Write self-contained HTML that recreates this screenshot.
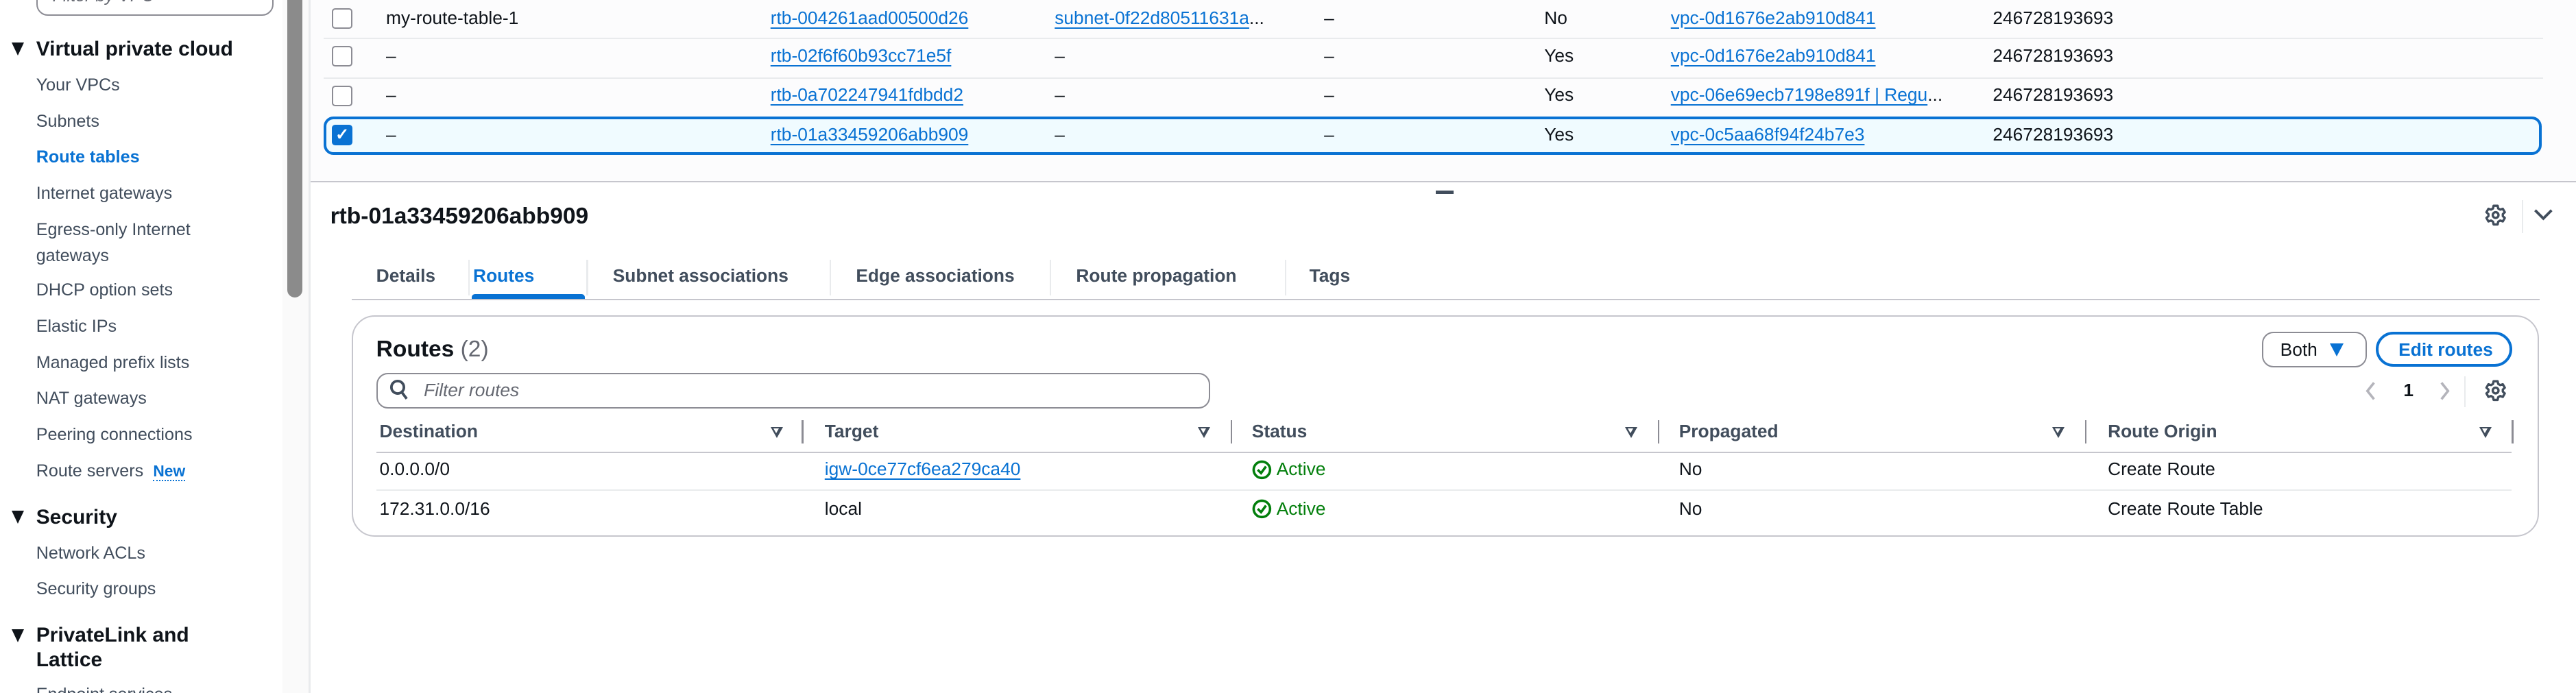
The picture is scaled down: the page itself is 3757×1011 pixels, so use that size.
<!DOCTYPE html>
<html><head><meta charset="utf-8"><style>
html,body{margin:0;padding:0;background:#fff;overflow:hidden}
#w{zoom:2.396;width:1568px;height:422px;position:relative;font-family:"Liberation Sans",sans-serif;font-size:11px;color:#0f141a;overflow:hidden}
.t{position:absolute;white-space:nowrap;line-height:14px}
.a{color:#0972d3;text-decoration:underline;text-underline-offset:2px}
.b{font-weight:bold}
.nav{color:#414d5c;font-size:10.5px}
.hd{font-weight:bold;font-size:12.5px;color:#0f141a}
.tri{position:absolute;width:0;height:0;border-left:4px solid transparent;border-right:4px solid transparent;border-top:8px solid #0f141a}
.cb{position:absolute;width:11px;height:11px;border:1px solid #8c8c94;border-radius:2px;background:#fff}
.hl{position:absolute;height:1px;background:#e9ebed}
.vl{position:absolute;width:1px;background:#c6c6cd}
.ft{position:absolute;width:0;height:0;border-left:4px solid transparent;border-right:4px solid transparent;border-top:7px solid #414d5c}
.ft:after{content:"";position:absolute;left:-2px;top:-6px;border-left:2px solid transparent;border-right:2px solid transparent;border-top:3px solid #fff}
</style></head><body><div id="w">
<!-- sidebar -->
<div style="position:absolute;left:0;top:0;width:172px;height:422px;background:#fff"></div>
<div style="position:absolute;left:172px;top:0;width:16px;height:422px;background:#fafafa"></div>
<div style="position:absolute;left:175px;top:-5px;width:9px;height:186px;background:#8b8b8b;border-radius:0 0 5px 5px"></div>
<div style="position:absolute;left:188px;top:0;width:1px;height:422px;background:#e9ebed"></div>
<div style="position:absolute;left:22px;top:-12px;width:143px;height:20px;border:1px solid #8c8c94;border-radius:7px;background:#fff"></div>
<div class="t" style="left:32px;top:-9px;color:#656871;font-style:italic;font-size:10.5px">Filter by VPC</div>
<div class="tri" style="left:7px;top:26px"></div><div class="t hd" style="left:22px;top:23px">Virtual private cloud</div>
<div class="t nav" style="left:22px;top:45px">Your VPCs</div>
<div class="t nav" style="left:22px;top:67px">Subnets</div>
<div class="t nav b" style="left:22px;top:89px;color:#0972d3">Route tables</div>
<div class="t nav" style="left:22px;top:111px">Internet gateways</div>
<div class="t nav" style="left:22px;top:133px">Egress-only Internet</div>
<div class="t nav" style="left:22px;top:149px">gateways</div>
<div class="t nav" style="left:22px;top:170px">DHCP option sets</div>
<div class="t nav" style="left:22px;top:192px">Elastic IPs</div>
<div class="t nav" style="left:22px;top:214px">Managed prefix lists</div>
<div class="t nav" style="left:22px;top:236px">NAT gateways</div>
<div class="t nav" style="left:22px;top:258px">Peering connections</div>
<div class="t nav" style="left:22px;top:280px">Route servers <span style="color:#0972d3;font-weight:bold;font-size:9.5px;margin-left:3px;border-bottom:1px dotted #0972d3">New</span></div>
<div class="tri" style="left:7px;top:311px"></div><div class="t hd" style="left:22px;top:308px">Security</div>
<div class="t nav" style="left:22px;top:330px">Network ACLs</div>
<div class="t nav" style="left:22px;top:352px">Security groups</div>
<div class="tri" style="left:7px;top:383px"></div><div class="t hd" style="left:22px;top:380px">PrivateLink and</div>
<div class="t hd" style="left:22px;top:395px">Lattice</div>
<div class="t nav" style="left:22px;top:416px">Endpoint services</div>
<!-- top table -->
<div style="position:absolute;left:189px;top:0;width:1379px;height:110px;background:#fcfcfd"></div>
<div class="hl" style="left:197px;top:23px;width:1351px"></div>
<div class="hl" style="left:197px;top:47px;width:1351px"></div>
<div style="position:absolute;left:197px;top:71px;width:1347px;height:20px;border:2px solid #0972d3;border-radius:6px;background:#f0fbff"></div>
<div class="cb" style="left:202px;top:5px"></div>
<div class="cb" style="left:202px;top:28px"></div>
<div class="cb" style="left:202px;top:52px"></div>
<div class="cb" style="left:202px;top:76px;background:#0972d3;border-color:#0972d3;color:#fff;font-size:10px;line-height:11px;text-align:center;font-weight:bold">✓</div>
<div class="t" style="left:235px;top:4px">my-route-table-1</div>
<div class="t" style="left:235px;top:27px">–</div><div class="t" style="left:235px;top:51px">–</div><div class="t" style="left:235px;top:75px">–</div>
<div class="t a" style="left:469px;top:4px">rtb-004261aad00500d26</div>
<div class="t a" style="left:469px;top:27px">rtb-02f6f60b93cc71e5f</div>
<div class="t a" style="left:469px;top:51px">rtb-0a702247941fdbdd2</div>
<div class="t a" style="left:469px;top:75px">rtb-01a33459206abb909</div>
<div class="t" style="left:642px;top:4px"><span class="a">subnet-0f22d80511631a</span>...</div>
<div class="t" style="left:642px;top:27px">–</div><div class="t" style="left:642px;top:51px">–</div><div class="t" style="left:642px;top:75px">–</div>
<div class="t" style="left:806px;top:4px">–</div><div class="t" style="left:806px;top:27px">–</div><div class="t" style="left:806px;top:51px">–</div><div class="t" style="left:806px;top:75px">–</div>
<div class="t" style="left:940px;top:4px">No</div><div class="t" style="left:940px;top:27px">Yes</div><div class="t" style="left:940px;top:51px">Yes</div><div class="t" style="left:940px;top:75px">Yes</div>
<div class="t a" style="left:1017px;top:4px">vpc-0d1676e2ab910d841</div>
<div class="t a" style="left:1017px;top:27px">vpc-0d1676e2ab910d841</div>
<div class="t" style="left:1017px;top:51px"><span class="a">vpc-06e69ecb7198e891f | Regu</span>...</div>
<div class="t a" style="left:1017px;top:75px">vpc-0c5aa68f94f24b7e3</div>
<div class="t" style="left:1213px;top:4px">246728193693</div><div class="t" style="left:1213px;top:27px">246728193693</div><div class="t" style="left:1213px;top:51px">246728193693</div><div class="t" style="left:1213px;top:75px">246728193693</div>
<!-- split -->
<div style="position:absolute;left:189px;top:110px;width:1379px;height:1px;background:#c6c6cd"></div>
<div style="position:absolute;left:874px;top:116px;width:11px;height:2px;background:#414d5c"></div>
<div class="t b" style="left:201px;top:124px;font-size:14px;line-height:16px">rtb-01a33459206abb909</div>
<svg style="position:absolute;left:1512px;top:124px" width="14" height="14" viewBox="0 0 16 16"><path d="M6.6 1.5h2.8l.4 1.9 1.4.8 1.8-.6 1.4 2.4-1.4 1.3v1.4l1.4 1.3-1.4 2.4-1.8-.6-1.4.8-.4 1.9H6.6l-.4-1.9-1.4-.8-1.8.6-1.4-2.4 1.4-1.3V7.3L1.6 6l1.4-2.4 1.8.6 1.4-.8z" fill="none" stroke="#414d5c" stroke-width="1.6" stroke-linejoin="round"/><circle cx="8" cy="8" r="2" fill="none" stroke="#414d5c" stroke-width="1.6"/></svg>
<div style="position:absolute;left:1535px;top:122px;width:1px;height:20px;background:#e9ebed"></div>
<svg style="position:absolute;left:1542px;top:126px" width="12" height="10" viewBox="0 0 12 10"><path d="M1 2l5 5 5-5" fill="none" stroke="#414d5c" stroke-width="1.6"/></svg>
<!-- tabs -->
<div class="t b" style="left:229px;top:161px;color:#414d5c">Details</div>
<div class="vl" style="left:285px;top:158px;height:22px;background:#e9ebed"></div>
<div class="t b" style="left:288px;top:161px;color:#0972d3">Routes</div>
<div style="position:absolute;left:287px;top:179px;width:69px;height:3px;background:#0972d3;border-radius:2px 2px 0 0"></div>
<div class="vl" style="left:357px;top:158px;height:22px;background:#e9ebed"></div>
<div class="t b" style="left:373px;top:161px;color:#414d5c">Subnet associations</div>
<div class="vl" style="left:505px;top:158px;height:22px;background:#e9ebed"></div>
<div class="t b" style="left:521px;top:161px;color:#414d5c">Edge associations</div>
<div class="vl" style="left:639px;top:158px;height:22px;background:#e9ebed"></div>
<div class="t b" style="left:655px;top:161px;color:#414d5c">Route propagation</div>
<div class="vl" style="left:782px;top:158px;height:22px;background:#e9ebed"></div>
<div class="t b" style="left:797px;top:161px;color:#414d5c">Tags</div>
<div style="position:absolute;left:214px;top:182px;width:1332px;height:1px;background:#c6c6cd"></div>
<!-- routes container -->
<div style="position:absolute;left:214px;top:192px;width:1330px;height:133px;border:1px solid #c6c6cd;border-radius:14px"></div>
<div class="t b" style="left:229px;top:205px;font-size:14px;line-height:16px">Routes <span style="font-weight:normal;color:#656871">(2)</span></div>
<div style="position:absolute;left:1377px;top:202px;width:62px;height:20px;border:1px solid #8c8c94;border-radius:7px"></div>
<div class="t" style="left:1388px;top:206px">Both</div>
<div style="position:absolute;left:1418px;top:209px;width:0;height:0;border-left:4.5px solid transparent;border-right:4.5px solid transparent;border-top:8px solid #0972d3"></div>
<div style="position:absolute;left:1446px;top:202px;width:80px;height:18px;border:2px solid #0972d3;border-radius:11px"></div>
<div class="t b" style="left:1460px;top:206px;color:#0972d3">Edit routes</div>
<div style="position:absolute;left:229px;top:227px;width:506px;height:20px;border:1px solid #8c8c94;border-radius:7px"></div>
<svg style="position:absolute;left:237px;top:231px" width="12" height="13" viewBox="0 0 12 13"><circle cx="5" cy="5" r="3.8" fill="none" stroke="#414d5c" stroke-width="1.6"/><path d="M7.5 8l3 4" stroke="#414d5c" stroke-width="1.6"/></svg>
<div class="t" style="left:258px;top:231px;color:#656871;font-style:italic">Filter routes</div>
<svg style="position:absolute;left:1439px;top:232px" width="8" height="12" viewBox="0 0 8 12"><path d="M6 1L2 6l4 5" fill="none" stroke="#b4b4bb" stroke-width="1.5"/></svg>
<div class="t b" style="left:1463px;top:231px">1</div>
<svg style="position:absolute;left:1484px;top:232px" width="8" height="12" viewBox="0 0 8 12"><path d="M2 1l4 5-4 5" fill="none" stroke="#b4b4bb" stroke-width="1.5"/></svg>
<div class="vl" style="left:1500px;top:229px;height:19px;background:#e9ebed"></div>
<svg style="position:absolute;left:1512px;top:231px" width="14" height="14" viewBox="0 0 16 16"><path d="M6.6 1.5h2.8l.4 1.9 1.4.8 1.8-.6 1.4 2.4-1.4 1.3v1.4l1.4 1.3-1.4 2.4-1.8-.6-1.4.8-.4 1.9H6.6l-.4-1.9-1.4-.8-1.8.6-1.4-2.4 1.4-1.3V7.3L1.6 6l1.4-2.4 1.8.6 1.4-.8z" fill="none" stroke="#414d5c" stroke-width="1.6" stroke-linejoin="round"/><circle cx="8" cy="8" r="2" fill="none" stroke="#414d5c" stroke-width="1.6"/></svg>
<!-- header -->
<div class="t b" style="left:231px;top:256px;color:#414d5c">Destination</div>
<div class="ft" style="left:469px;top:260px"></div><div class="vl" style="left:488px;top:256px;height:14px;background:#8c8c94"></div>
<div class="t b" style="left:502px;top:256px;color:#414d5c">Target</div>
<div class="ft" style="left:729px;top:260px"></div><div class="vl" style="left:749px;top:256px;height:14px;background:#8c8c94"></div>
<div class="t b" style="left:762px;top:256px;color:#414d5c">Status</div>
<div class="ft" style="left:989px;top:260px"></div><div class="vl" style="left:1009px;top:256px;height:14px;background:#8c8c94"></div>
<div class="t b" style="left:1022px;top:256px;color:#414d5c">Propagated</div>
<div class="ft" style="left:1249px;top:260px"></div><div class="vl" style="left:1269px;top:256px;height:14px;background:#8c8c94"></div>
<div class="t b" style="left:1283px;top:256px;color:#414d5c">Route Origin</div>
<div class="ft" style="left:1509px;top:260px"></div><div class="vl" style="left:1529px;top:256px;height:14px;background:#8c8c94"></div>
<div style="position:absolute;left:229px;top:275px;width:1300px;height:1px;background:#c6c6cd"></div>
<div class="hl" style="left:229px;top:298px;width:1300px"></div>
<div class="t" style="left:231px;top:279px">0.0.0.0/0</div>
<div class="t a" style="left:502px;top:279px">igw-0ce77cf6ea279ca40</div>
<svg style="position:absolute;left:762px;top:280px" width="12" height="12" viewBox="0 0 12 12"><circle cx="6" cy="6" r="5" fill="none" stroke="#037f0c" stroke-width="1.5"/><path d="M3.5 6l2 2 3-4" fill="none" stroke="#037f0c" stroke-width="1.5"/></svg>
<div class="t" style="left:777px;top:279px;color:#037f0c">Active</div>
<div class="t" style="left:1022px;top:279px">No</div>
<div class="t" style="left:1283px;top:279px">Create Route</div>
<div class="t" style="left:231px;top:303px">172.31.0.0/16</div>
<div class="t" style="left:502px;top:303px">local</div>
<svg style="position:absolute;left:762px;top:304px" width="12" height="12" viewBox="0 0 12 12"><circle cx="6" cy="6" r="5" fill="none" stroke="#037f0c" stroke-width="1.5"/><path d="M3.5 6l2 2 3-4" fill="none" stroke="#037f0c" stroke-width="1.5"/></svg>
<div class="t" style="left:777px;top:303px;color:#037f0c">Active</div>
<div class="t" style="left:1022px;top:303px">No</div>
<div class="t" style="left:1283px;top:303px">Create Route Table</div>
</div></body></html>
